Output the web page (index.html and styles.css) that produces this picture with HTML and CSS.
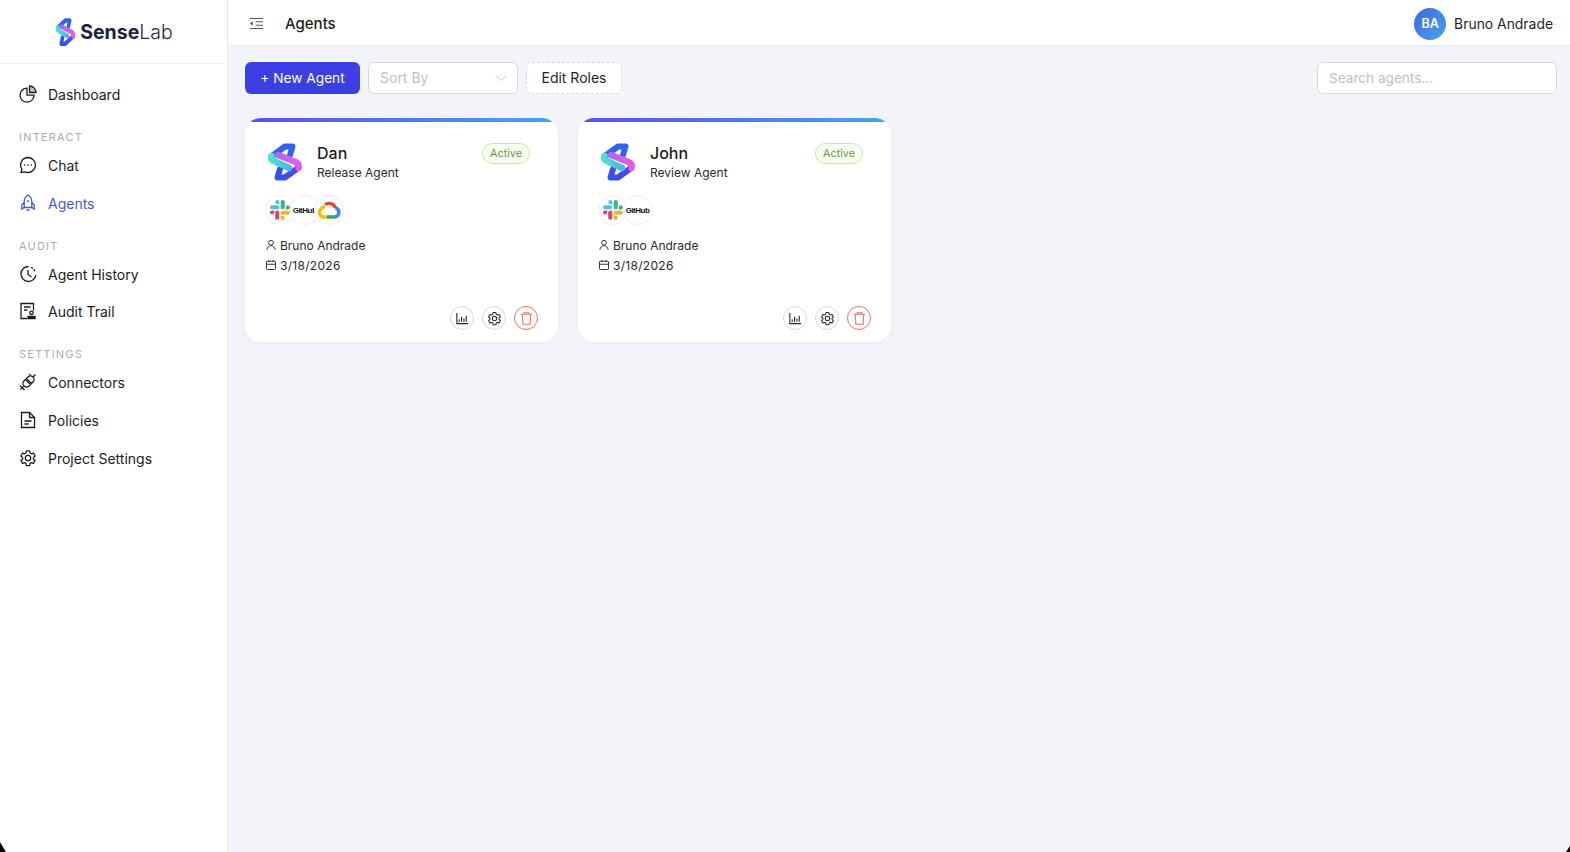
FILE: index.html
```html
<!DOCTYPE html>
<html>
<head>
  <meta charset="utf-8">
  <title>Agents</title>
  <link rel="stylesheet" href="styles.css">
</head>
<body>
  <svg class="defs" width="0" height="0">
    <defs>
      <linearGradient id="pink" gradientUnits="userSpaceOnUse" x1="13" y1="0" x2="34" y2="0"><stop offset="0" stop-color="#b468f2"/><stop offset="1" stop-color="#e35cf0"/></linearGradient>
      <linearGradient id="teal" gradientUnits="userSpaceOnUse" x1="5" y1="0" x2="26" y2="0"><stop offset="0" stop-color="#4fe3cc"/><stop offset="1" stop-color="#4ab4ea"/></linearGradient>
      <linearGradient id="blue-low" gradientUnits="userSpaceOnUse" x1="33" y1="24" x2="14" y2="38"><stop offset="0" stop-color="#5a3fe6"/><stop offset="1" stop-color="#2f55ef"/></linearGradient>
      <symbol id="logo" viewBox="0 0 40 40" preserveAspectRatio="none">
        <g fill="none" stroke-width="6" stroke-linejoin="round" stroke-linecap="round">
          <path d="M7 14L20 4.500H27.500L25 13" stroke="#2f62ee"/>
          <path d="M33 26L20 35.500H12.500L15 27" stroke="url(#blue-low)"/>
          <path d="M6.500 14Q5 17 8 18.500L24 26" stroke="url(#teal)" stroke-width="6.500"/>
          <path d="M13 13L30.500 20Q34.500 22 33.500 26" stroke="url(#pink)" stroke-width="6.500"/>
        </g>
      </symbol>
      <symbol id="slack" viewBox="0 0 24 24">
        <path d="M5 15a2.500 2.500 0 1 1-2.500-2.500H5zm1.200 0a2.500 2.500 0 0 1 5 0v6.200a2.500 2.500 0 0 1-5 0z" fill="#d8456f"/>
        <path d="M8.800 5a2.500 2.500 0 1 1 2.500-2.500V5zm0 1.200a2.500 2.500 0 0 1 0 5H2.500a2.500 2.500 0 0 1 0-5z" fill="#4fc0e8"/>
        <path d="M19 8.800a2.500 2.500 0 1 1 2.500 2.500H19zm-1.200 0a2.500 2.500 0 0 1-5 0V2.500a2.500 2.500 0 0 1 5 0z" fill="#3fb283"/>
        <path d="M15.200 19a2.500 2.500 0 1 1-2.500 2.500V19zm0-1.200a2.500 2.500 0 0 1 0-5h6.300a2.500 2.500 0 0 1 0 5z" fill="#e8b440"/>
      </symbol>
      <symbol id="gcloud" viewBox="0 0 24 24" fill="none" stroke-width="3.400">
        <path d="M8 6.600A7 7 0 0 1 18.500 10" stroke="#ea4335"/>
        <path d="M18.500 10A4.600 4.600 0 0 1 18 19" stroke="#4285f4"/>
        <path d="M18 19H10" stroke="#34a853"/>
        <path d="M10 19H6.500A4.600 4.600 0 0 1 3.800 11.200A5 5 0 0 1 8 8.800" stroke="#fbbc05"/>
      </symbol>
      <symbol id="bars" viewBox="0 0 16 16" fill="none" stroke="currentColor" stroke-width="1.200">
        <path d="M2 2v11.500h12"/>
        <path d="M4.500 11.500V9M7 11.500V6M9.500 11.500V8M12 11.500V5"/>
      </symbol>
      <symbol id="gear" viewBox="0 0 24 24" fill="none" stroke="currentColor" stroke-width="1.700" stroke-linejoin="round">
        <path d="M9.800 2.500h4.400l.6 2.900 1.700 1 2.800-.9 2.200 3.800-2.200 2v2l2.200 2-2.200 3.800-2.800-.9-1.700 1-.6 2.900H9.800l-.6-2.900-1.700-1-2.800.9-2.200-3.800 2.200-2v-2l-2.200-2 2.200-3.800 2.800.9 1.700-1z"/>
        <circle cx="12" cy="12" r="3.600"/>
      </symbol>
      <symbol id="trash" viewBox="0 0 16 16" fill="none" stroke="currentColor" stroke-width="1.100">
        <path d="M2 3.500h12M5.500 3.500V1.800h5v1.700M3.500 3.500l.6 10.700h7.800l.6-10.700"/>
      </symbol>
      <symbol id="user" viewBox="0 0 16 16" fill="none" stroke="currentColor" stroke-width="1.300">
        <circle cx="8" cy="5" r="3.200"/>
        <path d="M2.500 14.500c.4-3.500 2.600-5.500 5.500-5.500s5.100 2 5.500 5.500"/>
      </symbol>
      <symbol id="calendar" viewBox="0 0 16 16" fill="none" stroke="currentColor" stroke-width="1.300">
        <rect x="2" y="3" width="12" height="11" rx="1"/>
        <path d="M2 7h12M5 1.500V4M11 1.500V4"/>
      </symbol>
    </defs>
  </svg>

  <div class="app">
    <aside class="sidebar">
      <div class="brand">
        <svg class="brand-logo"><use href="#logo"/></svg>
        <span class="brand-name"><b>Sense</b>Lab</span>
      </div>
      <nav class="nav">
        <a class="nav-item">
          <svg class="nav-icon" viewBox="0 0 18 18" fill="none" stroke="currentColor" stroke-width="1.300"><path d="M8 3.200a7 7 0 1 0 7 7H8z"/><path d="M10.500 1a6.500 6.500 0 0 1 6.500 6.500h-6.500z" fill="currentColor" fill-opacity=".25"/></svg>
          Dashboard
        </a>
        <div class="nav-label first">INTERACT</div>
        <a class="nav-item">
          <svg class="nav-icon" viewBox="0 0 18 18" fill="none" stroke="currentColor" stroke-width="1.300"><path d="M9 1.500a7.500 7.500 0 1 1-3 14.400l-4 .6.900-3.300A7.500 7.500 0 0 1 9 1.500z"/><path d="M5.700 9h.01M9 9h.01M12.300 9h.01" stroke-linecap="round" stroke-width="1.600"/></svg>
          Chat
        </a>
        <a class="nav-item active">
          <svg class="nav-icon" viewBox="0 0 18 18" fill="none" stroke="currentColor" stroke-width="1.300"><path d="M9 1C11.800 2.600 12.800 5 12.800 8V13.500H5.200V8C5.200 5 6.200 2.600 9 1z"/><path d="M5.200 8.500 2.800 11V15l2.400-1.500M12.800 8.500l2.400 2.500V15l-2.400-1.500M9 6v2.500M7.500 16h3"/></svg>
          Agents
        </a>
        <div class="nav-label">AUDIT</div>
        <a class="nav-item">
          <svg class="nav-icon" viewBox="0 0 18 18" fill="none" stroke="currentColor" stroke-width="1.300"><path d="M9.500 1.500A7.500 7.500 0 1 0 16.900 10"/><path d="M9 5v4.500l3.500 2.500"/><path d="M12.500 2.500l1 .6M15 4.700l.6 1" stroke-linecap="round"/></svg>
          Agent History
        </a>
        <a class="nav-item tight">
          <svg class="nav-icon" viewBox="0 0 18 18" fill="none" stroke="currentColor" stroke-width="1.300"><path d="M8 16.500H2V1.500h12.500v7"/><path d="M5 5h6.500M5 8h3.500"/><circle cx="12.500" cy="10.800" r="1.700"/><path d="M9 16.500v-2h7v2z" fill="currentColor"/></svg>
          Audit Trail
        </a>
        <div class="nav-label settings">SETTINGS</div>
        <a class="nav-item">
          <svg class="nav-icon" viewBox="0 0 18 18" fill="none" stroke="currentColor" stroke-width="1.300"><path d="M6.500 6.500l5 5-1.500 1.500a3.500 3.500 0 0 1-5-5z"/><path d="M7.500 5.500l1.500-1.500a3.500 3.500 0 0 1 5 5L12.500 10.500z"/><path d="M14 4l2.500-2.500M4.500 13.500l-3 3M1 12.500l4.500 4.500M10 1l1.500 1"/></svg>
          Connectors
        </a>
        <a class="nav-item">
          <svg class="nav-icon" viewBox="0 0 18 18" fill="none" stroke="currentColor" stroke-width="1.300"><path d="M2.500 1.500h8l5 5v10h-13z"/><path d="M10.500 1.500v5h5M5.500 10h7M5.500 13h4"/></svg>
          Policies
        </a>
        <a class="nav-item">
          <svg class="nav-icon"><use href="#gear"/></svg>
          Project Settings
        </a>
      </nav>
    </aside>

    <div class="main">
      <header class="topbar">
        <div class="topbar-left">
          <svg class="collapse" viewBox="0 0 16 14" fill="none" stroke="currentColor" stroke-width="1.100"><path d="M1 1.500h14M7 5.200h8M7 8.800h8M1 12.500h14"/><path d="M4 4.700v4.600L1 7z" fill="currentColor" stroke="none"/></svg>
          <h1 class="page-title">Agents</h1>
        </div>
        <div class="profile">
          <span class="avatar">BA</span>
          <span class="profile-name">Bruno Andrade</span>
        </div>
      </header>

      <div class="content">
        <div class="toolbar">
          <button class="btn-primary">+ New Agent</button>
          <div class="select">
            <span>Sort By</span>
            <svg class="chevron" viewBox="0 0 12 8" fill="none" stroke="currentColor" stroke-width="1"><path d="M1 1.500l5 5 5-5"/></svg>
          </div>
          <button class="btn-dashed">Edit Roles</button>
          <input class="search" placeholder="Search agents...">
        </div>

        <div class="card-grid">
          <div class="card">
            <div class="card-head">
              <svg class="agent-logo"><use href="#logo"/></svg>
              <div class="agent-info">
                <div class="agent-name">Dan</div>
                <div class="agent-role">Release Agent</div>
              </div>
              <span class="badge">Active</span>
            </div>
            <div class="connectors">
              <span class="connector"><svg class="connector-icon"><use href="#slack"/></svg></span>
              <span class="connector github">GitHub</span>
              <span class="connector"><svg class="connector-icon large"><use href="#gcloud"/></svg></span>
            </div>
            <div class="meta"><svg class="meta-icon"><use href="#user"/></svg>Bruno Andrade</div>
            <div class="meta date"><svg class="meta-icon"><use href="#calendar"/></svg>3/18/2026</div>
            <div class="card-actions">
              <button class="action"><svg class="action-icon"><use href="#bars"/></svg></button>
              <button class="action"><svg class="action-icon"><use href="#gear"/></svg></button>
              <button class="action danger"><svg class="action-icon"><use href="#trash"/></svg></button>
            </div>
          </div>

          <div class="card">
            <div class="card-head">
              <svg class="agent-logo"><use href="#logo"/></svg>
              <div class="agent-info">
                <div class="agent-name">John</div>
                <div class="agent-role">Review Agent</div>
              </div>
              <span class="badge">Active</span>
            </div>
            <div class="connectors">
              <span class="connector"><svg class="connector-icon"><use href="#slack"/></svg></span>
              <span class="connector github">GitHub</span>
            </div>
            <div class="meta"><svg class="meta-icon"><use href="#user"/></svg>Bruno Andrade</div>
            <div class="meta date"><svg class="meta-icon"><use href="#calendar"/></svg>3/18/2026</div>
            <div class="card-actions">
              <button class="action"><svg class="action-icon"><use href="#bars"/></svg></button>
              <button class="action"><svg class="action-icon"><use href="#gear"/></svg></button>
              <button class="action danger"><svg class="action-icon"><use href="#trash"/></svg></button>
            </div>
          </div>
        </div>
      </div>
    </div>
  </div>
  <span class="corner left"></span>
  <span class="corner right"></span>
</body>
</html>
```

FILE: styles.css
```css
* {
  box-sizing: border-box;
}

html,
body {
  margin: 0;
  height: 100%;
  overflow: hidden;
}

body {
  font-family: Inter, "Liberation Sans", sans-serif;
  color: #1f1f24;
  background: #fff;
}

.defs {
  position: absolute;
}

.app {
  display: flex;
  height: 100%;
}

.sidebar {
  width: 228px;
  flex-shrink: 0;
  background: #fff;
  border-right: 1px solid #e8eaf0;
}

.brand {
  height: 64px;
  display: flex;
  align-items: center;
  justify-content: center;
  gap: 3px;
  border-bottom: 1px solid #eef0f4;
}

.brand-logo {
  width: 23px;
  height: 30px;
}

.brand-name {
  font-size: 19.500px;
  font-weight: 300;
  color: #262a4a;
}

.brand-name b {
  font-weight: 700;
  color: #1c1f3f;
}

.nav {
  padding: 11px 0 0 19px;
}

.nav-item {
  display: flex;
  align-items: center;
  gap: 11px;
  height: 38px;
  font-size: 14px;
  color: #1d1d20;
}

.nav-item.tight {
  height: 36px;
}

.nav-item.active {
  color: #3d5bd6;
}

.nav-icon {
  width: 18px;
  height: 18px;
  flex-shrink: 0;
}

.nav-label {
  margin-top: 16px;
  height: 17px;
  font-size: 11px;
  letter-spacing: 1.200px;
  line-height: 17px;
  color: #a9acb8;
}

.nav-label.settings {
  margin-top: 17px;
}

.main {
  flex: 1;
  display: flex;
  flex-direction: column;
  background: #f2f4f9;
}

.topbar {
  height: 45px;
  background: #fff;
  display: flex;
  align-items: center;
  justify-content: space-between;
  padding: 2px 17px 0 21px;
  box-shadow: 0 1px 3px rgba(0, 0, 0, 0.06);
}

.topbar-left {
  display: flex;
  align-items: center;
  gap: 21px;
}

.collapse {
  width: 15px;
  height: 13px;
  color: #55565c;
}

.page-title {
  margin: 0;
  font-size: 15px;
  font-weight: 500;
  color: #1d1d20;
}

.profile {
  display: flex;
  align-items: center;
  gap: 8px;
}

.avatar {
  width: 32px;
  height: 32px;
  border-radius: 50%;
  background: linear-gradient(135deg, #4466e0, #45a6e8);
  color: #fff;
  font-size: 12.500px;
  font-weight: 600;
  display: flex;
  align-items: center;
  justify-content: center;
}

.profile-name {
  font-size: 13.900px;
}

.content {
  flex: 1;
  padding: 17px 13px 0 17px;
}

.toolbar {
  display: flex;
  align-items: center;
  gap: 8px;
}

.btn-primary {
  width: 115px;
  height: 32px;
  padding: 0 0 1px;
  border: none;
  border-radius: 6px;
  background: #3b3fe4;
  color: #fff;
  font-family: inherit;
  font-size: 13.700px;
}

.select {
  width: 150px;
  height: 32px;
  display: flex;
  align-items: center;
  justify-content: space-between;
  padding: 0 10px 1px 11px;
  background: #fff;
  border: 1px solid #d9d9d9;
  border-radius: 6px;
  font-size: 14px;
  color: #bfbfbf;
}

.chevron {
  width: 12px;
  height: 8px;
}

.btn-dashed {
  width: 96px;
  height: 32px;
  padding: 0 0 1px;
  background: #fff;
  border: 1px dashed #d9d9d9;
  border-radius: 6px;
  font-family: inherit;
  font-size: 14px;
  color: #1f1f24;
}

.search {
  margin-left: auto;
  width: 240px;
  height: 32px;
  padding: 0 11px 1px;
  background: #fff;
  border: 1px solid #d9d9d9;
  border-radius: 6px;
  font-family: inherit;
  font-size: 13.600px;
}

.search::placeholder {
  color: #bfbfbf;
}

.card-grid {
  display: flex;
  gap: 20px;
  margin-top: 24px;
}

.card {
  width: 313px;
  height: 224px;
  padding: 24px 20px 0 20px;
  display: flex;
  flex-direction: column;
  position: relative;
  overflow: hidden;
  background: #fff;
  border-radius: 16px;
  box-shadow: 0 1px 4px rgba(0, 0, 0, 0.04);
}

.card::before {
  content: "";
  position: absolute;
  top: 0;
  left: 0;
  right: 0;
  height: 4px;
  background: linear-gradient(90deg, #5b4cf0, #45a6e8);
}

.card-head {
  display: flex;
  align-items: flex-start;
  gap: 12px;
}

.agent-logo {
  width: 40px;
  height: 40px;
  flex-shrink: 0;
}

.agent-info {
  flex: 1;
}

.agent-name {
  font-size: 16px;
  font-weight: 500;
  line-height: 22px;
  color: #1d1d20;
}

.agent-role {
  font-size: 12px;
  line-height: 17px;
  color: #2a2a2e;
}

.badge {
  margin: 1px 8px 0 0;
  height: 21px;
  padding: 0 7px;
  border: 1px solid #c6e9ab;
  border-radius: 11px;
  background: #f8fdf2;
  color: #5f9c3c;
  font-size: 10.800px;
  line-height: 19px;
}

.connectors {
  display: flex;
  margin-top: 13px;
}

.connector {
  width: 30px;
  height: 30px;
  margin-right: -5.500px;
  display: flex;
  align-items: center;
  justify-content: center;
  background: #fff;
  border: 1px solid #eeeeee;
  border-radius: 50%;
  overflow: hidden;
}

.connector-icon {
  width: 20px;
  height: 20px;
}

.connector-icon.large {
  width: 24px;
  height: 24px;
}

.github {
  font-family: "Liberation Sans", sans-serif;
  font-size: 8px;
  font-weight: 700;
  letter-spacing: -0.500px;
  color: #111;
  white-space: nowrap;
}

.meta {
  display: flex;
  align-items: center;
  gap: 3px;
  height: 20px;
  font-size: 12px;
  color: #2a2a2e;
}

.meta.date {
  letter-spacing: 0.300px;
}

.connectors + .meta {
  margin-top: 10px;
}

.meta-icon {
  width: 12px;
  height: 12px;
  color: #333;
}

.card-actions {
  display: flex;
  justify-content: flex-end;
  gap: 8px;
  margin-top: auto;
  margin-bottom: 12px;
}

.action {
  width: 24px;
  height: 24px;
  padding: 0;
  display: flex;
  align-items: center;
  justify-content: center;
  background: #fff;
  border: 1px solid #d9d9d9;
  border-radius: 50%;
  color: #2a2a2e;
}

.action.danger {
  border-color: #ef6f6f;
  color: #ef6f6f;
}

.action-icon {
  width: 15px;
  height: 15px;
}

.corner {
  position: fixed;
  bottom: 0;
  background: #000;
}

.corner.left {
  left: 0;
  width: 6px;
  height: 10px;
  clip-path: polygon(0 0, 100% 100%, 0 100%);
}

.corner.right {
  right: 0;
  width: 4px;
  height: 6px;
  clip-path: polygon(100% 0, 100% 100%, 0 100%);
}
```
